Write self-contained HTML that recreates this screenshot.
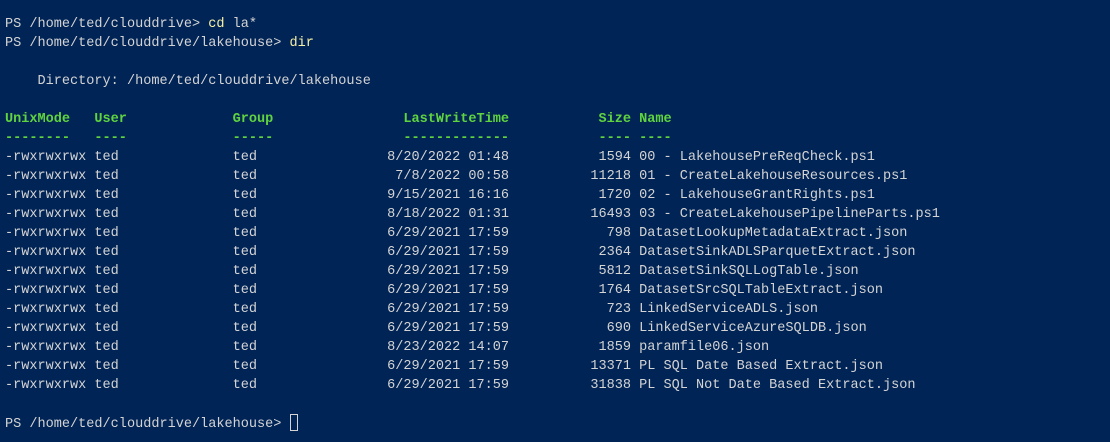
<!DOCTYPE html>
<html><head><meta charset="utf-8"><style>
html,body{margin:0;padding:0;background:#012456;width:1110px;height:442px;overflow:hidden}
pre{margin:0;position:absolute;left:5px;top:15px;font-family:"Liberation Mono",monospace;font-size:13.55px;line-height:19px;color:#d4d4d4}
.y{color:#f9f1a5}.g{color:#5fd43f;font-weight:bold}
.cur{display:inline-block;width:8px;height:17px;border:1px solid #d4d4d4;vertical-align:-4px;box-sizing:border-box}
</style></head><body><pre>PS /home/ted/clouddrive&gt; <span class="y">cd</span> la*
PS /home/ted/clouddrive/lakehouse&gt; <span class="y">dir</span>

    Directory: /home/ted/clouddrive/lakehouse

<span class="g">UnixMode   User             Group                LastWriteTime           Size Name</span>
<span class="g">--------   ----             -----                -------------           ---- ----</span>
-rwxrwxrwx ted              ted                8/20/2022 01:48           1594 00 - LakehousePreReqCheck.ps1
-rwxrwxrwx ted              ted                 7/8/2022 00:58          11218 01 - CreateLakehouseResources.ps1
-rwxrwxrwx ted              ted                9/15/2021 16:16           1720 02 - LakehouseGrantRights.ps1
-rwxrwxrwx ted              ted                8/18/2022 01:31          16493 03 - CreateLakehousePipelineParts.ps1
-rwxrwxrwx ted              ted                6/29/2021 17:59            798 DatasetLookupMetadataExtract.json
-rwxrwxrwx ted              ted                6/29/2021 17:59           2364 DatasetSinkADLSParquetExtract.json
-rwxrwxrwx ted              ted                6/29/2021 17:59           5812 DatasetSinkSQLLogTable.json
-rwxrwxrwx ted              ted                6/29/2021 17:59           1764 DatasetSrcSQLTableExtract.json
-rwxrwxrwx ted              ted                6/29/2021 17:59            723 LinkedServiceADLS.json
-rwxrwxrwx ted              ted                6/29/2021 17:59            690 LinkedServiceAzureSQLDB.json
-rwxrwxrwx ted              ted                8/23/2022 14:07           1859 paramfile06.json
-rwxrwxrwx ted              ted                6/29/2021 17:59          13371 PL SQL Date Based Extract.json
-rwxrwxrwx ted              ted                6/29/2021 17:59          31838 PL SQL Not Date Based Extract.json

PS /home/ted/clouddrive/lakehouse&gt; <span class="cur"></span></pre></body></html>
